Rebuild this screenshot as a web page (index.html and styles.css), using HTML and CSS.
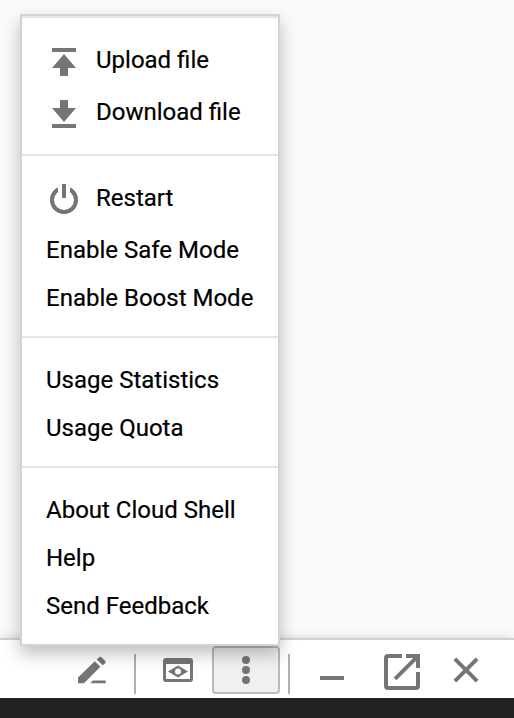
FILE: index.html
```html
<!DOCTYPE html>
<html lang="en">
<head>
<meta charset="utf-8">
<title>Cloud Shell</title>
<link rel="stylesheet" href="styles.css">
</head>
<body>
<main class="page"></main>
<nav class="toolbar">
  <button class="tool edit" aria-label="Edit"><svg width="28" height="28" viewBox="0 0 28 28"><path d="M0 21.500 16.800 5.300l5.600 5.400L6 27.300H0zM18.800 3.500l2.300-2.300q1.300-1 2.400 0l3.700 3.700q1 1.200 0 2.300L24.700 9.300zM14.800 24.500h.1L12.300 27.300h15.400v-2.800z"/></svg></button>
  <span class="rule"></span>
  <button class="tool preview" aria-label="Web preview"><svg width="30" height="24" viewBox="0 0 30 24"><path fill-rule="evenodd" d="M3 0h24q3 0 3 3v18q0 3-3 3H3q-3 0-3-3V3q0-3 3-3zM3 6v15h24V6zM5 13.500 15 7.500l10 6-10 6zM15 10.500a3 3 0 1 0 0 6 3 3 0 0 0 0-6z"/></svg></button>
  <button class="tool more" aria-label="More"><svg width="8" height="28" viewBox="0 0 8 28"><circle cx="4" cy="4" r="4"/><circle cx="4" cy="14" r="4"/><circle cx="4" cy="24" r="4"/></svg></button>
  <span class="rule after"></span>
  <button class="tool minimize" aria-label="Minimize"><svg width="24" height="4" viewBox="0 0 24 4"><path d="M0 0h24v4H0z"/></svg></button>
  <button class="tool open" aria-label="Open in new window"><svg width="36" height="36" viewBox="0 0 36 36"><path d="M4 0h14v4H4v28h28V18h4v14q0 4-4 4H4q-4 0-4-4V4q0-4 4-4zM22 0h14v14h-4V6.800L12.500 26.300l-2.800-2.800L29.200 4H22z"/></svg></button>
  <button class="tool close" aria-label="Close"><svg width="26" height="26" viewBox="0 0 26 26"><path d="M3.300.5 13 10.200 22.700.5l2.800 2.800L15.800 13l9.700 9.700-2.800 2.800L13 15.800l-9.700 9.700-2.800-2.800 9.700-9.700L.5 3.300z"/></svg></button>
</nav>
<div class="terminal"></div>
<div class="menu">
  <section class="group">
    <div class="item with-icon"><svg class="icon" viewBox="0 0 32 32"><path d="M4 2h24v4H4zM16 8l12 14h-8v8h-8v-8H4z"/></svg>Upload file</div>
    <div class="item with-icon"><svg class="icon" viewBox="0 0 32 32"><path d="M12 2h8v8h8L16 24 4 10h8zM4 26h24v4H4z"/></svg>Download file</div>
  </section>
  <section class="group">
    <div class="item with-icon"><svg class="icon" viewBox="0 0 32 32"><circle class="ring" cx="16" cy="16" r="12"/><path class="gap" d="M10 0h12v12H10z"/><path d="M14 0h4v14h-4z"/></svg>Restart</div>
    <div class="item">Enable Safe Mode</div>
    <div class="item">Enable Boost Mode</div>
  </section>
  <section class="group">
    <div class="item">Usage Statistics</div>
    <div class="item">Usage Quota</div>
  </section>
  <section class="group">
    <div class="item">About Cloud Shell</div>
    <div class="item">Help</div>
    <div class="item">Send Feedback</div>
  </section>
</div>
</body>
</html>
```
FILE: styles.css
```css
* { box-sizing: border-box; }
body {
  margin: 0;
  width: 514px;
  height: 718px;
  display: flex;
  flex-direction: column;
  overflow: hidden;
  position: relative;
  background: #fafafa;
  color: #000;
  font: 24px/44px Roboto, sans-serif;
  -webkit-text-stroke: .2px #000;
}
svg { display: block; fill: #757575; }
.page { flex: 1; }
.toolbar {
  height: 60px;
  display: flex;
  align-items: flex-start;
  border-top: 2px solid #d0d0d0;
  background: #fff;
  box-shadow: 0 0 10px rgba(0, 0, 0, .15);
}
.terminal { height: 20px; background: #222; position: relative; }
.tool { padding: 0; border: 0; background: none; }
.rule { width: 2px; height: 40px; margin: 14px 0 0 28px; background: #b0b0b0; }
.rule.after { margin-left: 8px; }
.edit { margin: 16px 0 0 78px; }
.preview { margin: 18px 0 0 27px; }
.more {
  width: 68px;
  height: 48px;
  margin: 6px 0 0 19px;
  display: flex;
  align-items: center;
  justify-content: center;
  border: 2px solid #bababa;
  border-radius: 4px;
  background: #f0f0f0;
}
.minimize { margin: 36px 0 0 30px; }
.open { margin: 14px 0 0 40px; }
.close { margin: 17px 0 0 33px; }
.menu {
  position: absolute;
  top: 14px;
  left: 20px;
  width: 260px;
  border: 2px solid #d3d3d3;
  background: #fff;
  box-shadow: 0 8px 16px rgba(0, 0, 0, .25);
}
.group { padding: 16px 24px; border-top: 2px solid #e5e5e5; }
.item { height: 48px; padding-top: 4px; white-space: nowrap; }
.with-icon { height: 52px; display: flex; }
.icon { width: 32px; height: 32px; margin: 8px 16px 0 2px; }
.ring { fill: none; stroke: #757575; stroke-width: 4; }
.gap { fill: #fff; }
```
